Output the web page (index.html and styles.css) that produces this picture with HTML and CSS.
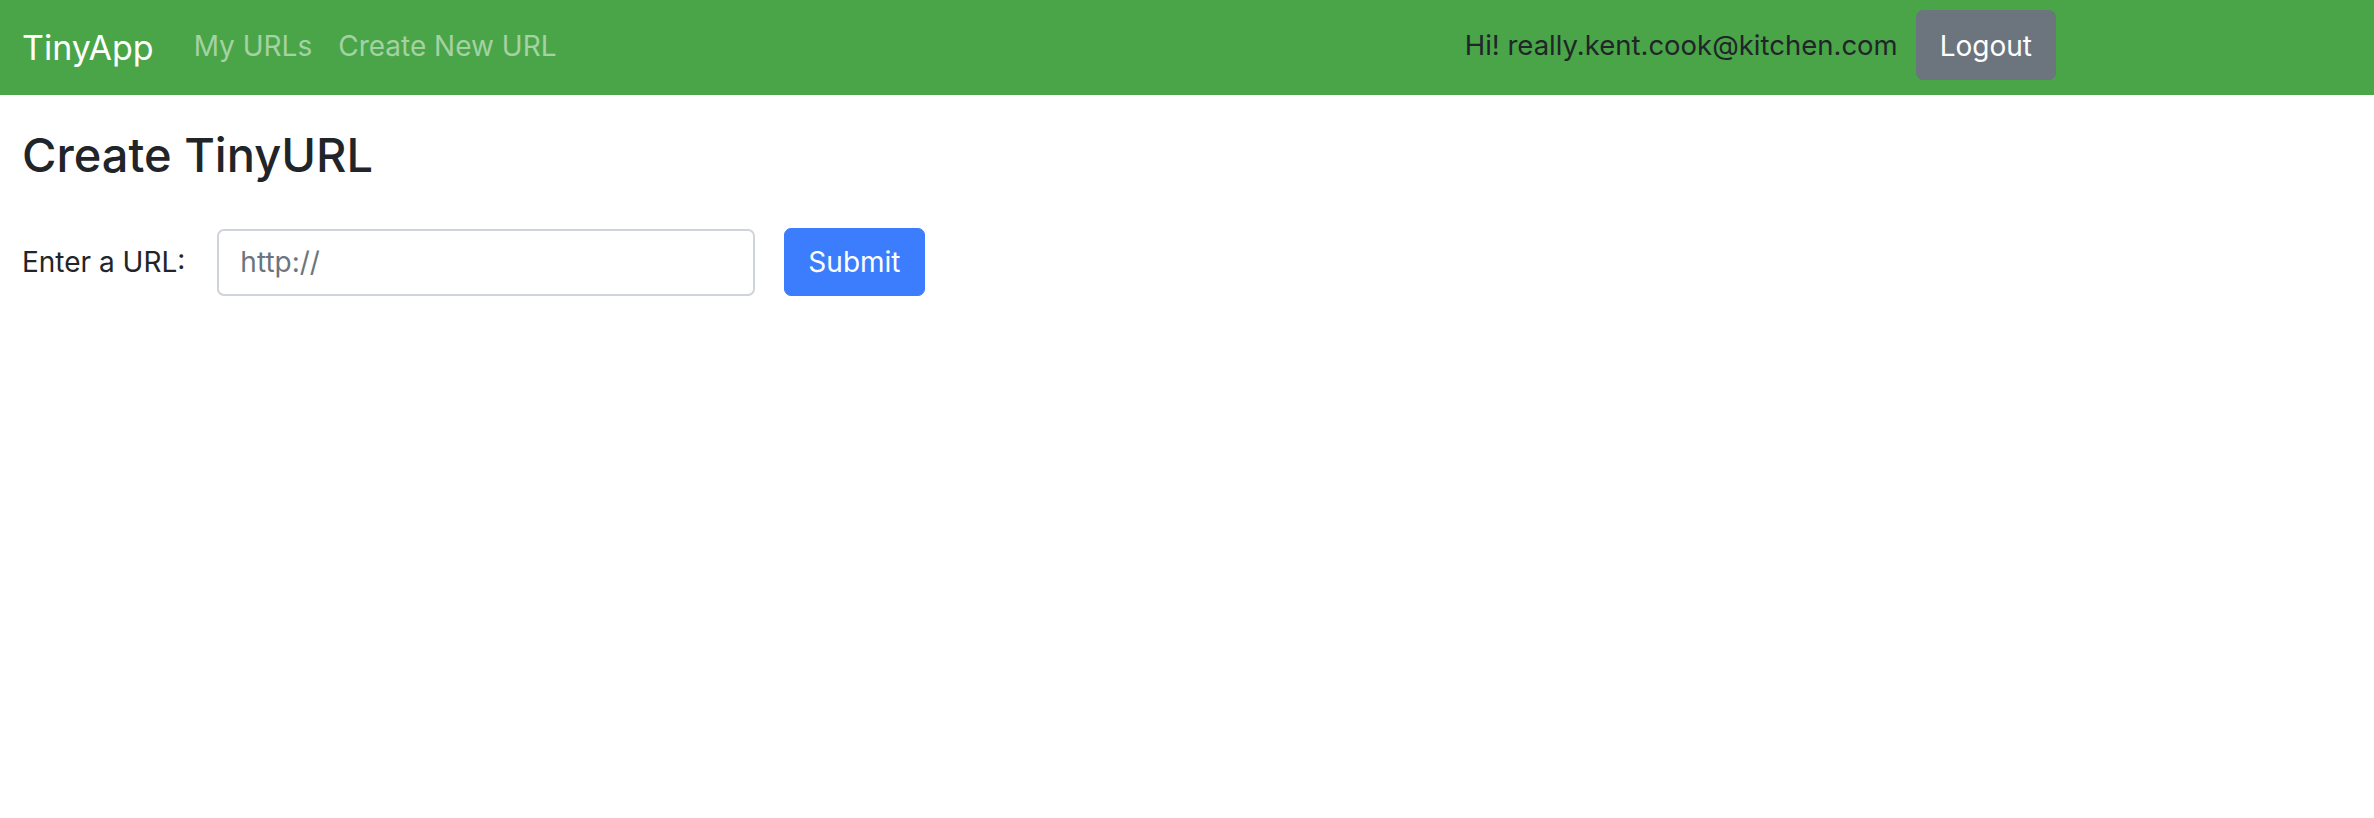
FILE: index.html
```html
<!DOCTYPE html>
<html lang="en">
<head>
<meta charset="utf-8">
<title>TinyApp</title>
<link rel="stylesheet" href="styles.css">
</head>
<body>
<nav class="navbar">
  <a class="brand" href="#">TinyApp</a>
  <ul class="nav-links">
    <li><a class="nav-link" href="#">My URLs</a></li>
    <li><a class="nav-link" href="#">Create New URL</a></li>
  </ul>
  <div class="nav-user">
    <span class="greeting">Hi! really.kent.cook@kitchen.com</span>
    <form class="logout-form">
      <button type="button" class="btn btn-secondary">Logout</button>
    </form>
  </div>
</nav>
<main class="page">
  <h1 class="title">Create TinyURL</h1>
  <form class="url-form">
    <label class="url-label" for="longURL">Enter a URL:</label>
    <input class="url-input" id="longURL" type="text" placeholder="http://">
    <button type="button" class="btn btn-primary">Submit</button>
  </form>
</main>
</body>
</html>
```

FILE: styles.css
```css
* { box-sizing: border-box; }

html, body {
  margin: 0;
  padding: 0;
  background: #ffffff;
}

body {
  font-family: Inter, "Noto Sans", "Liberation Sans", sans-serif;
  font-size: 28px;
  line-height: 1.5;
  color: #212529;
}

.navbar {
  display: flex;
  align-items: center;
  height: 95px;
  padding: 10px 0 15px 22px;
  background: #49a548;
}

.brand {
  font-size: 34px;
  color: #ffffff;
  text-decoration: none;
  margin-right: 27px;
  line-height: 1.5;
  padding-top: 5px;
}

.nav-links {
  display: flex;
  list-style: none;
  margin: 0;
  padding: 2px 0 0;
}

.nav-link {
  display: block;
  padding: 0 13px;
  color: rgba(255, 255, 255, 0.5);
  text-decoration: none;
}

.nav-user {
  margin-left: auto;
  padding-right: 318px;
  display: flex;
  align-items: center;
  gap: 18px;
}

.greeting {
  color: #212529;
  font-size: 27.5px;
  padding-top: 2px;
}

.logout-form {
  margin: 0;
}

.btn {
  font-family: inherit;
  font-size: 28px;
  line-height: 42px;
  padding: 13px 23px;
  border: 1px solid transparent;
  border-radius: 7px;
  color: #ffffff;
  cursor: pointer;
}

.btn-secondary {
  background: #6c757d;
  border-color: #6c757d;
  padding-top: 14px;
  padding-bottom: 12px;
}

.btn-primary {
  background: #3c7dfd;
  border-color: #3c7dfd;
  padding-top: 12px;
  padding-bottom: 12px;
}

.page {
  padding: 32px 22px 0;
}

.title {
  margin: 0 0 45px;
  font-size: 47px;
  font-weight: 500;
  line-height: 1.2;
}

.url-form {
  display: flex;
  align-items: center;
}

.url-label {
  margin-right: 32px;
}

.url-input {
  width: 538px;
  height: 67px;
  padding: 0 21px;
  font-family: inherit;
  font-size: 28px;
  color: #495057;
  border: 2px solid #ced4da;
  border-radius: 7px;
  margin-right: 29px;
  outline: none;
}

.url-input::placeholder {
  color: #6c757d;
}
```
